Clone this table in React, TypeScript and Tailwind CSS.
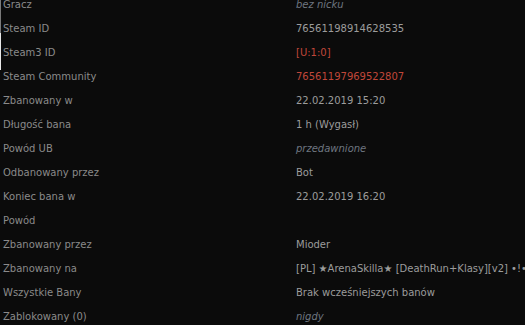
import React from "react";

type Row = { label: string; value: string; kind?: "red" | "muted" };

const rows: Row[] = [
  { label: "Gracz", value: "bez nicku", kind: "muted" },
  { label: "Steam ID", value: "76561198914628535" },
  { label: "Steam3 ID", value: "[U:1:0]", kind: "red" },
  { label: "Steam Community", value: "76561197969522807", kind: "red" },
  { label: "Zbanowany w", value: "22.02.2019 15:20" },
  { label: "Długość bana", value: "1 h (Wygasł)" },
  { label: "Powód UB", value: "przedawnione", kind: "muted" },
  { label: "Odbanowany przez", value: "Bot" },
  { label: "Koniec bana w", value: "22.02.2019 16:20" },
  { label: "Powód", value: "" },
  { label: "Zbanowany przez", value: "Mioder" },
  { label: "Zbanowany na", value: "[PL] ★ArenaSkilla★ [DeathRun+Klasy][v2] •!• Polski serwer" },
  { label: "Wszystkie Bany", value: "Brak wcześniejszych banów" },
  { label: "Zablokowany (0)", value: "nigdy", kind: "muted" },
];

export default function App() {
  return (
    <div
      className="relative w-[525px] h-[325px] overflow-hidden bg-[#0b0b0b] text-[10px]"
      style={{ fontFamily: '"DejaVu Sans", Verdana, sans-serif' }}
    >
      <span className="absolute left-0 top-0 w-px h-[33px] bg-[#7a7a7a]" />
      <span className="absolute left-0 top-[33px] w-px h-[37px] bg-[#e8e8e8]" />
      <div className="-mt-[8px] flex flex-col">
        {rows.map((r, i) => (
          <div key={i} className="flex h-[24px] items-center whitespace-nowrap">
            <div className="w-[296px] pl-[3px] text-[#8a8a8a] shrink-0">{r.label}</div>
            <div
              className={
                r.kind === "red"
                  ? "text-[#c0473a]"
                  : r.kind === "muted"
                  ? "italic text-[#6e7680]"
                  : "text-[#9c9c9c]"
              }
            >
              {r.value}
            </div>
          </div>
        ))}
      </div>
    </div>
  );
}
